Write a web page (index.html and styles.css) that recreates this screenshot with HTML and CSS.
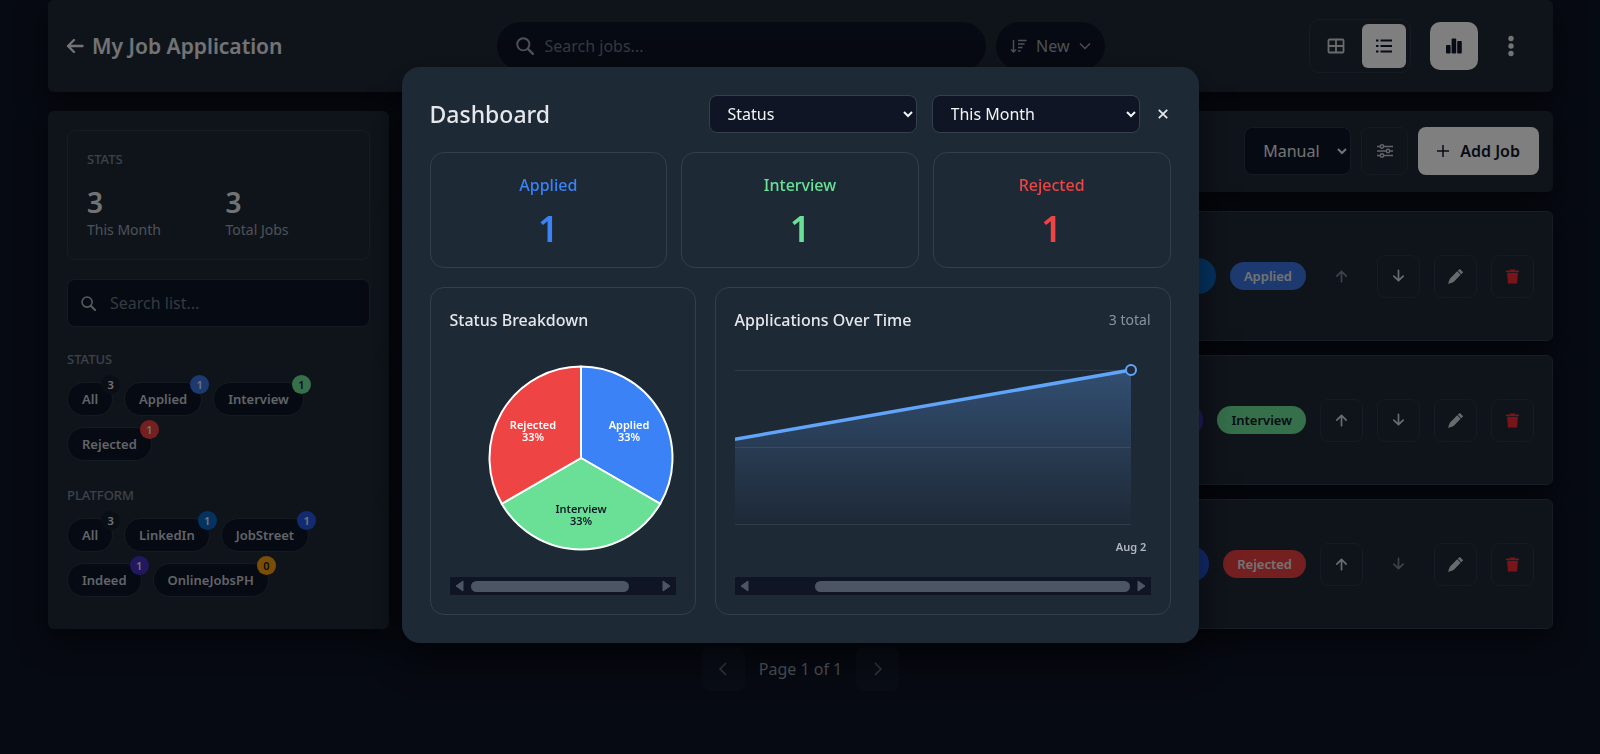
FILE: index.html
```html
<!DOCTYPE html>
<html lang="en">
<head>
    <meta charset="UTF-8">
    <meta name="viewport" content="width=device-width, initial-scale=1.0">
    <title>My Job Application</title>
    <link rel="stylesheet" href="styles.css">
</head>
<body>
    <!-- shared icons -->
    <svg class="sprite" aria-hidden="true">
        <symbol id="i-search" viewBox="0 0 16 16"><circle cx="6.5" cy="6.5" r="5.4" fill="none" stroke="currentColor" stroke-width="1.7"/><path d="M10.6 10.6 15 15" fill="none" stroke="currentColor" stroke-width="2.2" stroke-linecap="round"/></symbol>
        <symbol id="i-up" viewBox="0 0 16 16"><path d="M8 13.5V2.500M3 7.5 8 2.500l5 5" fill="none" stroke="currentColor" stroke-width="1.8" stroke-linecap="round" stroke-linejoin="round"/></symbol>
        <symbol id="i-down" viewBox="0 0 16 16"><path d="M8 1.500v11M3 7.500l5 5 5-5" fill="none" stroke="currentColor" stroke-width="1.8" stroke-linecap="round" stroke-linejoin="round"/></symbol>
        <symbol id="i-pencil" viewBox="0 0 16 16"><path d="M12.850.150a.5.5 0 0 0-.700 0L10.500 1.790 14.200 5.500l1.650-1.650a.5.5 0 0 0 0-.700zm.640 6.060L9.790 2.500 2.500 9.790c-.3.3-.500.600-.600.900L.2 15.200a.5.5 0 0 0 .6.600l4.500-1.700c.3-.1.600-.3.900-.600z" fill="currentColor"/></symbol>
        <symbol id="i-trash" viewBox="0 0 16 16"><path d="M6 .5h4a1 1 0 0 1 1 1h3a1 1 0 0 1 1 1v1H1v-1a1 1 0 0 1 1-1h3a1 1 0 0 1 1-1zM2.300 4.300h11.400l-.8 10.300a1 1 0 0 1-1 .9H4.100a1 1 0 0 1-1-.9z" fill="currentColor"/></symbol>
    </svg>

    <div class="page">
        <header class="topbar">
            <div class="brand">
                <a href="#" class="back" aria-label="Back">
                    <svg width="18" height="16" viewBox="0 0 18 16"><path d="M16.500 8H2M8 2 2 8l6 6" fill="none" stroke="currentColor" stroke-width="2.4" stroke-linecap="round" stroke-linejoin="round"/></svg>
                </a>
                <h1>My Job Application</h1>
            </div>
            <div class="top-search">
                <label class="search-pill">
                    <svg width="18" height="18"><use href="#i-search"/></svg>
                    <input type="text" placeholder="Search jobs..." aria-label="Search jobs">
                </label>
                <button class="sort-pill">
                    <svg width="17" height="15" viewBox="0 0 17 15"><path d="M3.500 1v12M1 10.500 3.500 13 6 10.500M8 1.500h8.500M8 5h6.500M8 8.500h4.500M8 12h2.500" fill="none" stroke="currentColor" stroke-width="1.4"/></svg>
                    <span>New</span>
                    <svg width="12" height="8" viewBox="0 0 12 8"><path d="m1 1.500 5 5 5-5" fill="none" stroke="currentColor" stroke-width="1.3"/></svg>
                </button>
            </div>
            <div class="top-actions">
                <div class="view-toggle">
                    <button aria-label="Grid view">
                        <svg width="18" height="16" viewBox="0 0 18 16"><path d="M2.500 1.500h13a1 1 0 0 1 1 1v11a1 1 0 0 1-1 1h-13a1 1 0 0 1-1-1v-11a1 1 0 0 1 1-1zM9 1.500v13M1.500 8h15" fill="none" stroke="currentColor" stroke-width="1.800"/></svg>
                    </button>
                    <button class="active" aria-label="List view">
                        <svg width="18" height="16" viewBox="0 0 18 16"><path d="M5.500 2.500H17M5.500 8H17M5.500 13.500H17M1 2.500h2.500M1 8h2.500M1 13.500h2.500" fill="none" stroke="currentColor" stroke-width="2"/></svg>
                    </button>
                </div>
                <button class="chart-btn" aria-label="Dashboard">
                    <svg width="16" height="16" viewBox="0 0 16 16" fill="currentColor"><rect x="0" y="7" width="4.600" height="8.500" rx="1"/><rect x="5.600" y="0.500" width="4.600" height="15" rx="1"/><rect x="11.200" y="3" width="4.600" height="12.500" rx="1"/></svg>
                </button>
                <button class="dots" aria-label="More">
                    <svg width="6" height="22" viewBox="0 0 6 22" fill="currentColor"><circle cx="3" cy="3.500" r="2.700"/><circle cx="3" cy="11" r="2.700"/><circle cx="3" cy="18.500" r="2.700"/></svg>
                </button>
            </div>
        </header>

        <div class="columns">
            <aside class="sidebar">
                <section class="stats">
                    <h2 class="caption">STATS</h2>
                    <div class="stats-grid">
                        <div><strong>3</strong><span>This Month</span></div>
                        <div><strong>3</strong><span>Total Jobs</span></div>
                    </div>
                </section>
                <label class="list-search">
                    <svg width="15" height="15"><use href="#i-search"/></svg>
                    <input type="text" placeholder="Search list..." aria-label="Search list">
                </label>
                <h2 class="caption">STATUS</h2>
                <div class="chips">
                    <button class="chip">All<span class="badge">3</span></button>
                    <button class="chip">Applied<span class="badge applied">1</span></button>
                    <button class="chip">Interview<span class="badge interview">1</span></button>
                    <button class="chip">Rejected<span class="badge rejected">1</span></button>
                </div>
                <h2 class="caption">PLATFORM</h2>
                <div class="chips">
                    <button class="chip">All<span class="badge">3</span></button>
                    <button class="chip">LinkedIn<span class="badge linkedin">1</span></button>
                    <button class="chip">JobStreet<span class="badge jobstreet">1</span></button>
                    <button class="chip">Indeed<span class="badge indeed">1</span></button>
                    <button class="chip">OnlineJobsPH<span class="badge onlinejobs">0</span></button>
                </div>
            </aside>

            <main class="content">
                <div class="toolbar">
                    <select class="order" aria-label="Order"><option>Manual</option></select>
                    <button class="filter-btn" aria-label="Filters">
                        <svg width="16" height="14" viewBox="0 0 16 14" fill="none" stroke="currentColor" stroke-width="1.500"><path d="M0 2.500h3M7 2.500h9M0 7h9M13 7h3M0 11.500h3M7 11.500h9"/><circle cx="5" cy="2.500" r="1.700"/><circle cx="11" cy="7" r="1.700"/><circle cx="5" cy="11.500" r="1.700"/></svg>
                    </button>
                    <button class="add-btn">
                        <svg width="12" height="12" viewBox="0 0 12 12"><path d="M6 0v12M0 6h12" stroke="currentColor" stroke-width="1.500"/></svg>
                        Add Job
                    </button>
                </div>

                <article class="job">
                    <span class="platform linkedin"></span>
                    <span class="status applied">Applied</span>
                    <button class="icon-btn" disabled aria-label="Move up"><svg width="15" height="15"><use href="#i-up"/></svg></button>
                    <button class="icon-btn" aria-label="Move down"><svg width="15" height="15"><use href="#i-down"/></svg></button>
                    <button class="icon-btn" aria-label="Edit"><svg width="15" height="15"><use href="#i-pencil"/></svg></button>
                    <button class="icon-btn delete" aria-label="Delete"><svg width="15" height="15"><use href="#i-trash"/></svg></button>
                </article>
                <article class="job">
                    <span class="platform indeed"></span>
                    <span class="status interview">Interview</span>
                    <button class="icon-btn" aria-label="Move up"><svg width="15" height="15"><use href="#i-up"/></svg></button>
                    <button class="icon-btn" aria-label="Move down"><svg width="15" height="15"><use href="#i-down"/></svg></button>
                    <button class="icon-btn" aria-label="Edit"><svg width="15" height="15"><use href="#i-pencil"/></svg></button>
                    <button class="icon-btn delete" aria-label="Delete"><svg width="15" height="15"><use href="#i-trash"/></svg></button>
                </article>
                <article class="job">
                    <span class="platform jobstreet"></span>
                    <span class="status rejected">Rejected</span>
                    <button class="icon-btn" aria-label="Move up"><svg width="15" height="15"><use href="#i-up"/></svg></button>
                    <button class="icon-btn" disabled aria-label="Move down"><svg width="15" height="15"><use href="#i-down"/></svg></button>
                    <button class="icon-btn" aria-label="Edit"><svg width="15" height="15"><use href="#i-pencil"/></svg></button>
                    <button class="icon-btn delete" aria-label="Delete"><svg width="15" height="15"><use href="#i-trash"/></svg></button>
                </article>
            </main>
        </div>

        <nav class="pagination" aria-label="Pagination">
            <button disabled aria-label="Previous page"><svg width="8" height="14" viewBox="0 0 8 14"><path d="M7 1 1 7l6 6" fill="none" stroke="currentColor" stroke-width="1.500"/></svg></button>
            <span>Page 1 of 1</span>
            <button disabled aria-label="Next page"><svg width="8" height="14" viewBox="0 0 8 14"><path d="m1 1 6 6-6 6" fill="none" stroke="currentColor" stroke-width="1.500"/></svg></button>
        </nav>
    </div>

    <div class="overlay">
        <div class="modal" role="dialog" aria-labelledby="dash-title">
            <div class="modal-head">
                <h2 id="dash-title">Dashboard</h2>
                <select aria-label="Group by"><option>Status</option></select>
                <select aria-label="Period"><option>This Month</option></select>
                <button class="close" aria-label="Close">
                    <svg width="10" height="10" viewBox="0 0 10 10"><path d="m.8.8 8.400 8.400M9.200.8.800 9.200" stroke="currentColor" stroke-width="1.800"/></svg>
                </button>
            </div>

            <div class="totals">
                <div class="total is-applied"><span>Applied</span><strong>1</strong></div>
                <div class="total is-interview"><span>Interview</span><strong>1</strong></div>
                <div class="total is-rejected"><span>Rejected</span><strong>1</strong></div>
            </div>

            <div class="charts">
                <section class="chart">
                    <div class="chart-head"><h3>Status Breakdown</h3></div>
                    <div class="scroller">
                        <svg width="262" height="240" viewBox="0 0 262 240">
                            <g stroke="#fff" stroke-width="2" stroke-linejoin="round">
                                <path d="M131 121V29.500A91.500 91.500 0 0 1 210.240 166.750Z" fill="#3b82f6"/>
                                <path d="M131 121 210.240 166.750A91.500 91.500 0 0 1 51.760 166.750Z" fill="#6ae096"/>
                                <path d="M131 121 51.760 166.750A91.500 91.500 0 0 1 131 29.500Z" fill="#ef4444"/>
                            </g>
                            <g class="pie-text">
                                <text x="179" y="92">Applied</text>
                                <text x="179" y="104">33%</text>
                                <text x="83" y="92">Rejected</text>
                                <text x="83" y="104">33%</text>
                                <g class="dark">
                                    <text x="131" y="176">Interview</text>
                                    <text x="131" y="188">33%</text>
                                </g>
                            </g>
                        </svg>
                    </div>
                    <div class="scrollbar">
                        <svg width="9" height="12" viewBox="0 0 9 12"><path d="M8 1v10L1 6z" fill="currentColor" stroke="currentColor" stroke-linejoin="round"/></svg>
                        <div class="track"><div class="thumb" style="width: 86%"></div></div>
                        <svg width="9" height="12" viewBox="0 0 9 12"><path d="M1 1v10l7-5z" fill="currentColor" stroke="currentColor" stroke-linejoin="round"/></svg>
                    </div>
                </section>

                <section class="chart">
                    <div class="chart-head"><h3>Applications Over Time</h3><span>3 total</span></div>
                    <div class="scroller to-end">
                        <svg width="500" height="240" viewBox="0 0 500 240">
                            <defs>
                                <linearGradient id="area" x1="0" y1="0" x2="0" y2="1">
                                    <stop offset="0" stop-color="#60a5fa" stop-opacity="0.3"/>
                                    <stop offset="1" stop-color="#60a5fa" stop-opacity="0"/>
                                </linearGradient>
                            </defs>
                            <path d="M20 33.500H480M20 110.500H480M20 187.500H480" stroke="#303c4a"/>
                            <path d="M20 113.500 480 33V187H20Z" fill="url(#area)"/>
                            <path d="M20 113.500 480 33" fill="none" stroke="#60a5fa" stroke-width="3.500"/>
                            <circle cx="480" cy="33" r="5" fill="#1f2937" stroke="#60a5fa" stroke-width="2"/>
                            <text class="axis-text" x="480" y="214">Aug 2</text>
                        </svg>
                    </div>
                    <div class="scrollbar">
                        <svg width="9" height="12" viewBox="0 0 9 12"><path d="M8 1v10L1 6z" fill="currentColor" stroke="currentColor" stroke-linejoin="round"/></svg>
                        <div class="track to-end"><div class="thumb" style="width: 84%"></div></div>
                        <svg width="9" height="12" viewBox="0 0 9 12"><path d="M1 1v10l7-5z" fill="currentColor" stroke="currentColor" stroke-linejoin="round"/></svg>
                    </div>
                </section>
            </div>
        </div>
    </div>
</body>
</html>
```
FILE: styles.css
```css
* {
    box-sizing: border-box;
}
body {
    margin: 0;
    min-height: 100vh;
    background-color: #0d1424;
    color: #e5e7eb;
    font-family: "Noto Sans", "Open Sans", sans-serif;
    font-size: 16px;
}
h1, h2, h3 {
    margin: 0;
    font-weight: 500;
}
button, input, select {
    font: inherit;
    color: inherit;
}
button {
    display: flex;
    align-items: center;
    justify-content: center;
    padding: 0;
    border: none;
    background: none;
}
svg {
    flex: none;
    display: block;
}
.sprite {
    position: absolute;
    width: 0;
    height: 0;
}
.page {
    padding: 0 47px 0 48px;
}

/* top bar */
.topbar {
    display: grid;
    grid-template-columns: 1fr 608px 1fr;
    align-items: center;
    height: 92px;
    padding: 0 18px;
    border-radius: 6px;
    background-color: #1f2937;
    box-shadow: 0 10px 30px rgba(0, 0, 0, 0.6);
}
.brand {
    display: flex;
    align-items: center;
    gap: 8px;
}
.back {
    color: #e5e7eb;
}
.brand h1 {
    font-size: 21px;
    font-weight: 600;
}
.top-search {
    display: flex;
    gap: 10px;
}
.search-pill, .sort-pill {
    display: flex;
    align-items: center;
    height: 48px;
    border-radius: 24px;
    background-color: #0d1424;
    color: #9ca3af;
}
.search-pill {
    flex: 1;
    gap: 11px;
    padding: 0 19px;
}
input {
    flex: 1;
    min-width: 0;
    padding: 0;
    border: none;
    outline: none;
    background: none;
}
input::placeholder {
    color: #6b7280;
}
.sort-pill {
    gap: 9px;
    padding: 0 14px;
}
.top-actions {
    display: flex;
    align-items: center;
    justify-content: flex-end;
}
.view-toggle {
    display: flex;
    gap: 4px;
    padding: 4px;
    border: 1px solid #2b3644;
    border-radius: 10px;
    color: #d1d5db;
}
.view-toggle button {
    width: 44px;
    height: 44px;
    border-radius: 6px;
}
.view-toggle .active {
    background-color: #fff;
    color: #0f172a;
}
.chart-btn {
    width: 48px;
    height: 48px;
    margin-left: 19px;
    border-radius: 10px;
    background-color: #fff;
    color: #0f172a;
}
.dots {
    width: 48px;
    height: 48px;
    margin-left: 9px;
}

/* columns */
.columns {
    display: grid;
    grid-template-columns: 341px 1fr;
    gap: 19px;
    margin-top: 19px;
}
.sidebar, .toolbar, .job {
    border-radius: 6px;
    background-color: #1f2937;
    box-shadow: 0 10px 30px rgba(0, 0, 0, 0.6);
}
.sidebar {
    padding: 19px;
}
.caption {
    color: #7b8491;
    font-size: 13px;
    font-weight: 500;
    line-height: 18px;
}
.stats {
    padding: 19px;
    border: 1px solid #2e3947;
    border-radius: 8px;
}
.stats-grid {
    display: grid;
    grid-template-columns: 1fr 1fr;
    gap: 14px;
    margin-top: 16px;
}
.stats-grid strong, .stats-grid span {
    display: block;
}
.stats-grid strong {
    font-size: 28px;
    font-weight: 600;
    line-height: 36px;
}
.stats-grid span {
    color: #9ca3af;
    font-size: 14px;
    line-height: 20px;
}
.list-search {
    display: flex;
    align-items: center;
    gap: 14px;
    height: 48px;
    margin: 19px 0 23px;
    padding: 0 13px;
    border: 1px solid #2b3644;
    border-radius: 8px;
    background-color: #0d1424;
    color: #b0b5bd;
}
.chips {
    display: flex;
    flex-wrap: wrap;
    gap: 11px;
    margin: 14px 0 25px;
}
.chips:last-child {
    margin-bottom: 11px;
}
.chip {
    position: relative;
    height: 34px;
    padding: 0 14px;
    border: 1px solid #2b3644;
    border-radius: 17px;
    background-color: #0d1424;
    color: #c3c8d0;
    font-size: 13px;
    font-weight: 600;
}
.badge {
    position: absolute;
    top: -8px;
    right: -8px;
    width: 19px;
    border-radius: 10px;
    background-color: #151e2c;
    color: #e5e7eb;
    font-size: 11px;
    font-weight: 600;
    line-height: 19px;
}
.applied {
    background-color: #3b74e0;
}
.interview {
    background-color: #6ae096;
    color: #0f172a;
}
.rejected {
    background-color: #ea4040;
}
.linkedin {
    background-color: #0a66c2;
}
.jobstreet {
    background-color: #2557e0;
}
.indeed {
    background-color: #4430c0;
}
.onlinejobs {
    background-color: #f59e0b;
    color: #0f172a;
}

/* job list */
.content {
    display: flex;
    flex-direction: column;
    gap: 14px;
}
.toolbar {
    display: flex;
    justify-content: flex-end;
    gap: 10px;
    margin-bottom: 5px;
    padding: 16px 14px 17px;
}
.order {
    width: 107px;
    height: 48px;
    padding: 0 0 0 14px;
    border: 1px solid #2b3644;
    border-radius: 8px;
    background-color: #0d1424;
}
.filter-btn {
    width: 47px;
    border: 1px solid #2b3644;
    border-radius: 8px;
    color: #c3c8d0;
}
.add-btn {
    gap: 11px;
    padding: 0 19px;
    border-radius: 8px;
    background-color: #fff;
    color: #0f172a;
    font-weight: 600;
}
.job {
    display: flex;
    align-items: center;
    justify-content: flex-end;
    gap: 14px;
    height: 130px;
    padding: 0 18px;
    border: 1px solid #2f3a48;
}
.platform {
    width: 90px;
    height: 36px;
    border-radius: 18px;
}
.status {
    padding: 0 14px;
    border-radius: 14px;
    font-size: 13px;
    font-weight: 600;
    line-height: 28px;
}
.icon-btn {
    width: 43px;
    height: 43px;
    border: 1px solid #2b3644;
    border-radius: 8px;
    color: #d1d5db;
}
.icon-btn:disabled {
    border-color: transparent;
    color: #7b8491;
}
.delete {
    color: #ef2b33;
}

/* pagination */
.pagination {
    display: flex;
    align-items: center;
    justify-content: center;
    gap: 14px;
    margin-top: 18px;
    color: #9ca3af;
}
.pagination button {
    width: 43px;
    height: 44px;
    border-radius: 8px;
    background-color: #121a2b;
    color: #6b7280;
}

/* dashboard modal */
.overlay {
    position: fixed;
    inset: 0;
    display: flex;
    align-items: center;
    justify-content: center;
    padding-bottom: 44px;
    background-color: rgba(0, 0, 0, 0.5);
}
.modal {
    width: 94%;
    max-width: 797px;
    padding: 28px;
    border-radius: 18px;
    background-color: #1e2936;
    box-shadow: 0 16px 40px rgba(0, 0, 0, 0.5);
}
.modal-head {
    display: flex;
    align-items: center;
    gap: 15px;
}
.modal-head h2 {
    flex: 1;
    font-size: 23px;
    line-height: 32px;
}
.modal-head select {
    width: 208px;
    height: 38px;
    padding: 0 0 0 14px;
    border: 1px solid #333f4e;
    border-radius: 8px;
    background-color: #0f1524;
    color: #f3f4f6;
}
.close {
    width: 16px;
    height: 38px;
}
.totals {
    display: grid;
    grid-template-columns: repeat(3, 1fr);
    gap: 14px;
    margin: 19px 0;
}
.total {
    display: flex;
    flex-direction: column;
    align-items: center;
    gap: 8px;
    padding: 20px 0 14px;
    border: 1px solid #333f4e;
    border-radius: 14px;
}
.total span {
    font-weight: 500;
    line-height: 24px;
}
.total strong {
    font-size: 36px;
    font-weight: 600;
    line-height: 48px;
}
.is-applied {
    color: #3b82f6;
}
.is-interview {
    color: #6ae096;
}
.is-rejected {
    color: #ef4444;
}
.charts {
    display: grid;
    grid-template-columns: 7fr 12fr;
    gap: 19px;
}
.chart {
    min-width: 0;
    padding: 19px;
    border: 1px solid #333f4e;
    border-radius: 14px;
}
.chart-head {
    display: flex;
    justify-content: space-between;
    line-height: 26px;
}
.chart-head h3 {
    font-size: 16px;
}
.chart-head span {
    color: #8a93a0;
    font-size: 14px;
}
.scroller {
    display: flex;
    margin-top: 4px;
    overflow: hidden;
}
.to-end {
    justify-content: flex-end;
}
.pie-text {
    fill: #fff;
    font-size: 11px;
    font-weight: 600;
    text-anchor: middle;
}
.dark {
    fill: #0f172a;
}
.axis-text {
    fill: #b0b7c1;
    font-size: 11px;
    font-weight: 600;
    text-anchor: middle;
}
.scrollbar {
    display: flex;
    align-items: center;
    justify-content: space-between;
    gap: 7px;
    height: 18px;
    padding: 0 5px;
    background-color: #0f1524;
    color: #4b5563;
}
.track {
    display: flex;
    flex: 1;
}
.thumb {
    height: 11px;
    border-radius: 6px;
    background-color: #4b5563;
}
```
